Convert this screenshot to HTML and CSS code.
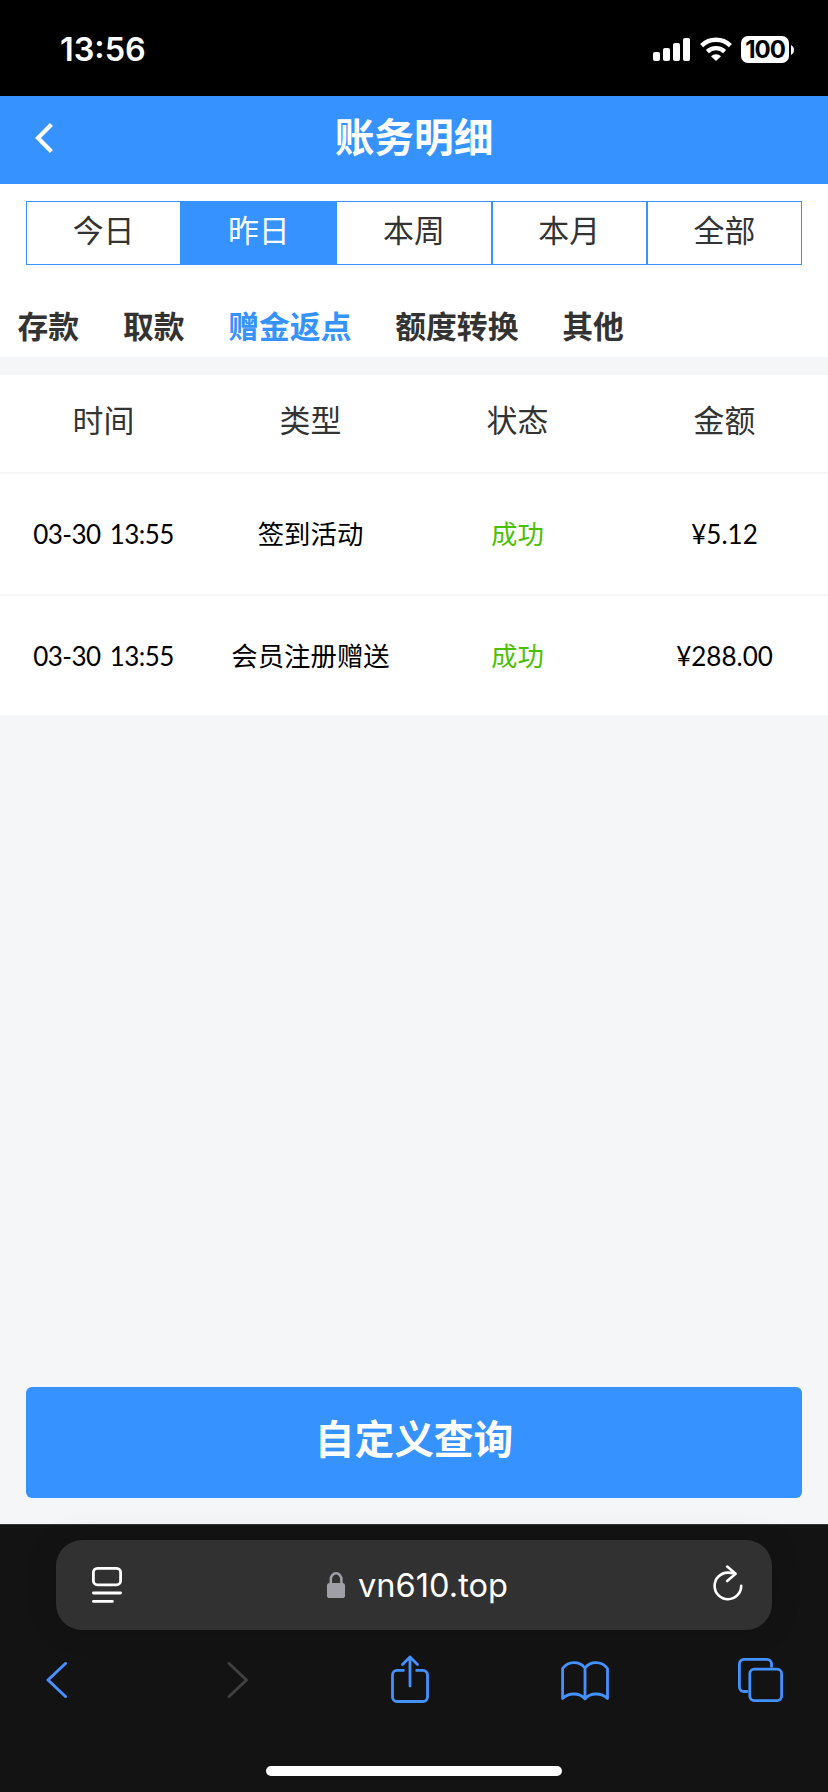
FILE: index.html
```html
<!DOCTYPE html>
<html lang="zh-CN">
<head>
<meta charset="utf-8">
<meta name="viewport" content="width=device-width">
<title>账务明细</title>
<link rel="stylesheet" href="styles.css">
</head>
<body>
<div class="status">
  <span class="clock">13:56</span>
  <div class="indicators">
    <svg class="signal" width="37" height="23" viewBox="0 0 37 23" fill="#fff"><rect x="0" y="14" width="7" height="9" rx="2"/><rect x="10" y="10" width="7" height="13" rx="2"/><rect x="20" y="5" width="7" height="18" rx="2"/><rect x="30" y="0" width="7" height="23" rx="2"/></svg>
    <svg class="wifi" width="32" height="24" viewBox="0 0 32 24"><g fill="none" stroke="#fff" stroke-width="4.4"><path d="M1.6 8.6a20.6 20.6 0 0 1 28.8 0"/><path d="M7.4 14.6a12.4 12.4 0 0 1 17.2 0"/></g><path d="M11 19.2a7.2 7.2 0 0 1 10 0L16 24z" fill="#fff"/></svg>
    <div class="battery"><span class="level">100</span></div>
    <svg class="nub" width="3" height="10" viewBox="0 0 3 10"><path d="M0 0q3 1.6 3 5t-3 5z" fill="#fff"/></svg>
  </div>
</div>

<header class="header">
  <svg class="back" width="18" height="30" viewBox="0 0 18 30" fill="none" stroke="#fff" stroke-width="4.2"><path d="M16.4 1.5 3 15l13.4 13.5"/></svg>
  <h1 class="title">账务明细</h1>
</header>

<main class="page">
  <section class="filters">
    <div class="periods">
      <div class="period">今日</div><div class="period active">昨日</div><div class="period">本周</div><div class="period">本月</div><div class="period">全部</div>
    </div>
    <nav class="tabs">
      <span>存款</span><span>取款</span><span class="current">赠金返点</span><span>额度转换</span><span>其他</span>
    </nav>
  </section>

  <section class="records">
    <div class="row head"><span>时间</span><span>类型</span><span>状态</span><span>金额</span></div>
    <div class="row"><span class="time">03-30 13:55</span><span>签到活动</span><span class="ok">成功</span><span class="amount">¥5.12</span></div>
    <div class="row last"><span class="time">03-30 13:55</span><span>会员注册赠送</span><span class="ok">成功</span><span class="amount">¥288.00</span></div>
  </section>

  <div class="query">自定义查询</div>
</main>

<footer class="browser">
  <div class="address">
    <svg class="reader" width="30" height="36" viewBox="0 0 30 36" fill="none" stroke="#fff" stroke-width="2.8" stroke-linecap="round"><rect x="1.4" y="1.4" width="27.2" height="16.4" rx="4"/><path d="M1.4 26h27.2M1.4 34.4h19"/></svg>
    <div class="site">
      <svg width="18" height="26" viewBox="0 0 18 26"><path d="M3.8 13V7.3a5.3 6 0 0 1 10.6 0V13" fill="none" stroke="#a09fa7" stroke-width="2.5"/><rect x="0" y="11" width="18" height="15" rx="2.6" fill="#a09fa7"/></svg>
      <span class="url">vn610.top</span>
    </div>
    <svg class="reload" width="30" height="36" viewBox="0 0 30 36" fill="none" stroke="#fff" stroke-width="2.6" stroke-linecap="round" stroke-linejoin="round"><path d="M28.2 20.7A13.3 13.3 0 1 1 14.9 7.6q4 0 7 .9"/><path d="M14.2 1.6 22.6 8.7 14.2 16"/></svg>
  </div>
  <div class="toolbar">
    <svg class="t-back" width="22" height="36" viewBox="0 0 22 36" fill="none" stroke="#4492ff" stroke-width="3" stroke-linecap="round" stroke-linejoin="round"><path d="M19.5 1.5 2 18l17.5 16.5"/></svg>
    <svg class="t-forward" width="22" height="36" viewBox="0 0 22 36" fill="none" stroke="#404042" stroke-width="3" stroke-linecap="round" stroke-linejoin="round"><path d="M2 1.5 19.5 18 2 34.5"/></svg>
    <svg class="t-share" width="38" height="48" viewBox="0 0 38 48" fill="none" stroke="#4492ff" stroke-width="2.8"><path d="M13.5 15.4H6a4.5 4.5 0 0 0-4.5 4.5V42A4.5 4.5 0 0 0 6 46.5h26a4.5 4.5 0 0 0 4.5-4.5V19.900a4.5 4.5 0 0 0-4.5-4.5h-7.5"/><path d="M19 31V2M11.5 9.5 19 2l7.5 7.5" stroke-linecap="round" stroke-linejoin="round"/></svg>
    <svg class="t-book" width="48" height="40" viewBox="0 0 48 40" fill="none" stroke="#4492ff" stroke-width="2.8" stroke-linejoin="round"><path d="M24 7Q20 1.600 13 1.600T1.600 7.500V37.500Q6 33 13 33t11 5q4-5 11-5t11.500 4.500V7.500Q42 1.600 35 1.600T24 7zV38"/></svg>
    <svg class="t-tabs" width="45" height="44" viewBox="0 0 45 44" fill="none" stroke="#4492ff" stroke-width="2.8"><path d="M33.5 9.5V5.9a4.5 4.5 0 0 0-4.5-4.5H5.9a4.5 4.5 0 0 0-4.5 4.5V29a4.5 4.5 0 0 0 4.5 4.5h4"/><rect x="11.8" y="11.2" width="31.8" height="31.4" rx="4.5"/></svg>
  </div>
  <div class="home"></div>
</footer>
</body>
</html>
```
FILE: styles.css
```css
* { box-sizing: border-box; }
body {
  margin: 0;
  width: 828px;
  height: 1792px;
  overflow: hidden;
  display: flex;
  flex-direction: column;
  font-family: Lato, "Noto Sans CJK SC", sans-serif;
  background: #f4f6f8;
  color: #333;
}
svg { display: block; flex: none; }

.status {
  height: 96px;
  padding: 0 34px 0 60px;
  display: flex;
  justify-content: space-between;
  background: #000;
  color: #fff;
  font-family: Inter, sans-serif;
}
.clock { font-size: 32.4px; font-weight: 600; line-height: 100px; }
.indicators { display: flex; align-items: flex-start; padding-top: 36px; }
.signal { margin-top: 2px; }
.wifi { margin: 1px 9px 0 10px; }
.battery {
  width: 48px;
  height: 27px;
  border-radius: 7px;
  background: #fff;
  color: #000;
  text-align: center;
}
.level { display: block; font-size: 24px; font-weight: 700; line-height: 28px; letter-spacing: -1px; }
.nub { margin: 9px 0 0 2px; }

.header {
  height: 88px;
  display: grid;
  grid-template-columns: 120px 1fr 120px;
  background: #3592ff;
  color: #fff;
}
.back { margin: 27px 0 0 35px; }
.title {
  margin: 0;
  font-size: 39.7px;
  font-weight: 700;
  line-height: 82px;
  text-align: center;
}

.page { height: 1340px; display: flex; flex-direction: column; }
.filters { height: 173px; padding-top: 17px; background: #fff; }
.periods { display: flex; height: 64px; margin: 0 26px; }
.period {
  flex: 1;
  border: 1px solid #3592ff;
  text-align: center;
  font-size: 30.9px;
  line-height: 58px;
}
.active { background: #3592ff; color: #fff; }
.tabs {
  display: flex;
  gap: 43.8px;
  padding: 34px 0 0 17.5px;
  font-size: 30.8px;
  font-weight: 700;
  line-height: 56px;
  white-space: nowrap;
}
.current { color: #3592ff; }

.records { margin-top: 18px; }
.row {
  height: 122px;
  display: grid;
  grid-template-columns: repeat(4, 1fr);
  align-items: center;
  text-align: center;
  background: #fff;
  border-bottom: 2px solid #f7f7f8;
  color: #000;
  font-size: 26.4px;
  line-height: 40px;
}
.head { height: 99px; font-size: 30.9px; color: #333; padding-bottom: 5px; }
.last { height: 119px; border-bottom: 0; }
.time { font-size: 26px; letter-spacing: -0.55px; word-spacing: 3px; }
.amount { font-size: 26px; }
.ok { color: #4bc000; }

.query {
  margin: auto 26px 26px;
  height: 111px;
  border-radius: 6px;
  background: #3592ff;
  color: #fff;
  font-size: 39.7px;
  font-weight: 700;
  line-height: 103px;
  text-align: center;
}

.browser {
  height: 268px;
  padding-top: 15px;
  border-top: 1px solid #343537;
  background: #131313;
}
.address {
  height: 90px;
  margin: 0 56px;
  padding: 0 29px 0 36px;
  display: flex;
  justify-content: space-between;
  align-items: flex-start;
  border-radius: 26px;
  background: #313131;
  box-shadow: 0 0 30px rgba(0, 0, 0, 0.15);
  color: #fff;
}
.reader { margin-top: 27px; }
.site { display: flex; gap: 13px; padding-top: 32px; }
.url { font-family: Inter, sans-serif; font-size: 32.6px; line-height: 26px; }
.reload { margin-top: 25px; }
.toolbar { height: 136px; padding: 25px 45px 0 46px; display: flex; align-items: flex-start; }
.t-back { margin-top: 7px; }
.t-forward { margin: 7px 0 0 159px; }
.t-share { margin-left: 142px; }
.t-book { margin: 6px 0 0 132px; }
.t-tabs { margin: 3px 0 0 129px; }
.home { width: 296px; height: 10px; margin: 0 auto; border-radius: 5px; background: #fff; }
```
